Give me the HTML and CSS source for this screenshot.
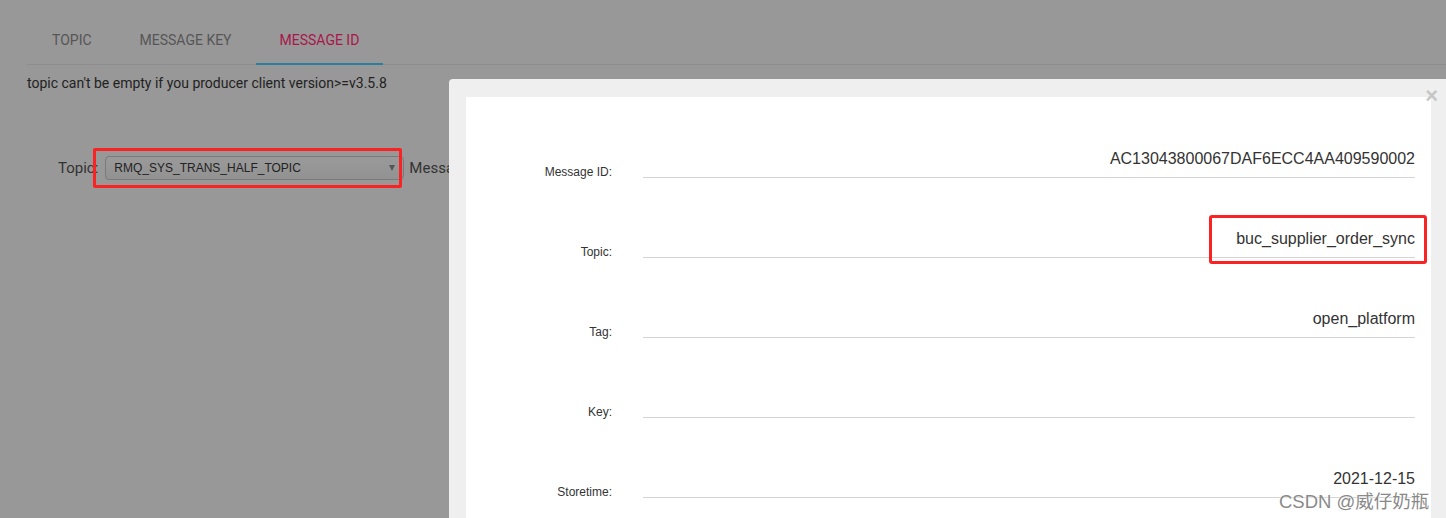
FILE: index.html
```html
<!DOCTYPE html>
<html lang="en">
<head>
    <meta charset="UTF-8">
    <title>Message Query</title>
    <link rel="stylesheet" href="styles.css">
</head>
<body>
    <div class="page">
        <div class="tabs">
            <div class="tab">TOPIC</div>
            <div class="tab">MESSAGE KEY</div>
            <div class="tab active">MESSAGE ID</div>
        </div>
        <div class="note">topic can't be empty if you producer client version&gt;=v3.5.8</div>

        <div class="query-row">
            <span class="query-label">Topic:</span>
            <div class="select-wrap">
                <div class="select">
                    <span>RMQ_SYS_TRANS_HALF_TOPIC</span>
                    <span class="caret"></span>
                </div>
            </div>
            <span class="query-label">Message ID:</span>
        </div>
    </div>

    <div class="modal">
        <span class="close">&times;</span>
        <div class="modal-body">
            <div class="field">
                <label>Message ID:</label>
                <div class="value">AC13043800067DAF6ECC4AA409590002</div>
            </div>
            <div class="field">
                <label>Topic:</label>
                <div class="value"><span class="value-mark">buc_supplier_order_sync</span></div>
            </div>
            <div class="field">
                <label>Tag:</label>
                <div class="value">open_platform</div>
            </div>
            <div class="field">
                <label>Key:</label>
                <div class="value"></div>
            </div>
            <div class="field">
                <label>Storetime:</label>
                <div class="value">2021-12-15</div>
            </div>
        </div>
    </div>

    <div class="watermark">CSDN @威仔奶瓶</div>
</body>
</html>
```

FILE: styles.css
```css
html, body {
    height: 100%;
}

body {
    margin: 0;
    background-color: #989898;
    font-family: Roboto, "Liberation Sans", sans-serif;
    color: #222;
    overflow: hidden;
    position: relative;
}

.page {
    padding: 17px 0 0 27px;
}

/* Tabs */
.tabs {
    display: flex;
    border-bottom: 1px solid #8d8d8d;
}

.tab {
    padding: 15px 24px 14px;
    font-size: 14px;
    line-height: 17px;
    color: #565656;
    border-bottom: 2px solid transparent;
    margin-bottom: -1px;
}

.tab:first-child {
    padding-left: 25px;
}

.tab.active {
    color: #a8164b;
    border-bottom-color: #2a7f9e;
}

.note {
    margin-top: 10px;
    font-size: 14px;
    line-height: 16px;
    color: #222;
}

/* Query form */
.query-row {
    display: flex;
    align-items: center;
    margin-top: 65px;
    padding-left: 31px;
}

.query-label {
    font-size: 15px;
    color: #333;
}

.select-wrap {
    position: relative;
    margin: 0 5px 0 7px;
}

/* red annotation box drawn over the select */
.select-wrap::after {
    content: "";
    position: absolute;
    left: -12px;
    right: 2px;
    top: -8px;
    bottom: -8px;
    border: 3px solid #fa2222;
    border-radius: 2px;
}

.select {
    width: 281px;
    height: 22px;
    display: flex;
    align-items: center;
    justify-content: space-between;
    padding: 0 8px;
    border: 1px solid #7a7a7a;
    border-radius: 4px;
    background: linear-gradient(#9a9a9a, #929292);
    font-family: "Liberation Sans", Arial, sans-serif;
    font-size: 12px;
    color: #222;
}

.caret {
    width: 0;
    height: 0;
    border-left: 3.5px solid transparent;
    border-right: 3.5px solid transparent;
    border-top: 6px solid #555;
}

/* Modal */
.modal {
    position: absolute;
    left: 449px;
    top: 79px;
    right: 0;
    bottom: -40px;
    background-color: #efefef;
    border-radius: 4px 0 0 0;
    padding: 18px 15px 0 17px;
}

.close {
    position: absolute;
    right: 8px;
    top: 7px;
    font-family: "Liberation Sans", Arial, sans-serif;
    font-size: 22px;
    font-weight: bold;
    line-height: 20px;
    color: #c6c6c6;
}

.modal-body {
    background-color: #fff;
    height: 100%;
    padding-right: 16px;
    padding-top: 1px;
}

.field {
    display: grid;
    grid-template-columns: 146px 1fr;
    column-gap: 31px;
    align-items: end;
    height: 80px;
    font-family: "Liberation Sans", Arial, sans-serif;
    color: #333;
}

.field label {
    text-align: right;
    font-size: 12px;
    line-height: 14px;
    margin-bottom: -1px;
}

.value {
    text-align: right;
    font-size: 16px;
    line-height: 18px;
    min-height: 18px;
    padding-bottom: 9px;
    border-bottom: 1px solid #d4d4d4;
    position: relative;
}

.value-mark {
    position: relative;
}

.value-mark::after {
    content: "";
    position: absolute;
    left: -27px;
    right: -12px;
    top: -15px;
    bottom: -17px;
    border: 3px solid #fa2222;
    border-radius: 3px;
}

.watermark {
    position: absolute;
    left: 1279px;
    top: 487px;
    font-family: "Liberation Sans", "Noto Sans CJK SC", sans-serif;
    font-size: 18.5px;
    color: #8a8a8a;
    text-shadow: 0 0 2px #fff, 0 0 2px #fff;
}
```
